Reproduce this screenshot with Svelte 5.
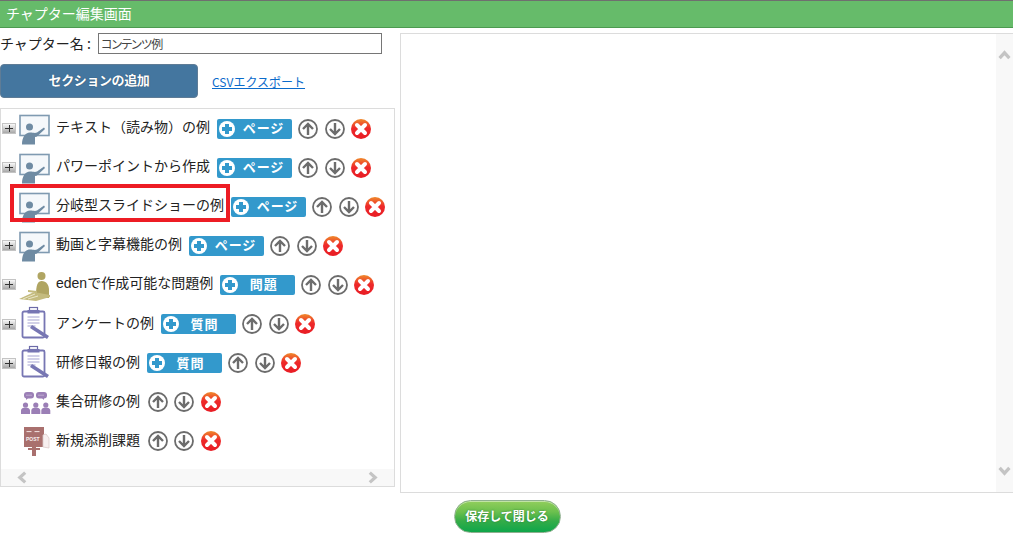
<script>
  const rows = [
    { name: 'テキスト（読み物）の例', kind: 'teacher', tree: true, add: 'ページ' },
    { name: 'パワーポイントから作成', kind: 'teacher', tree: true, add: 'ページ' },
    { name: '分岐型スライドショーの例', kind: 'teacher', tree: false, add: 'ページ', marked: true },
    { name: '動画と字幕機能の例', kind: 'teacher', tree: true, add: 'ページ' },
    { name: 'edenで作成可能な問題例', kind: 'eden', tree: true, add: '問題' },
    { name: 'アンケートの例', kind: 'clip', tree: true, add: '質問' },
    { name: '研修日報の例', kind: 'clip', tree: true, add: '質問' },
    { name: '集合研修の例', kind: 'group', tree: false },
    { name: '新規添削課題', kind: 'post', tree: false }
  ];
</script>

{#snippet icon(kind)}
  <svg class="kind" viewBox="0 0 34 34" aria-hidden="true">
    {#if kind === 'teacher'}
      <rect x="2" y="3.500" width="29" height="20" fill="#f5f8fb" stroke="#7f9ab1" stroke-width="1.600" />
      <circle cx="11.500" cy="15" r="3.500" fill="#6f8ba3" />
      <path d="M4 32.500c0-7 3-12 8-12 3 0 5 1 7 0l7-5 1 1.500-7 6.500c-1 1-2 1.500-3 1.500v7.500z" fill="#6f8ba3" />
    {:else if kind === 'eden'}
      <circle cx="23.500" cy="8" r="4" fill="#b0a562" />
      <path d="M18 30c0-8 0-17 5.500-17 5 0 7.500 4 7.500 9v8z" fill="#b0a562" />
      <path d="M10 22l9 1v2l-9-1zM1 31l15-7 16 3v2l-14 4z" fill="#c4bb7e" />
      <path d="M5 31l12-5M10 31l10-3" stroke="#f3f0dc" stroke-width="0.800" />
    {:else if kind === 'clip'}
      <rect x="4.500" y="4.500" width="22" height="26" rx="1.500" fill="#fff" stroke="#7776b3" stroke-width="1.800" />
      <rect x="11.500" y="0.500" width="8" height="3" fill="#fff" stroke="#6c6aa8" stroke-width="1.200" />
      <rect x="9.500" y="3" width="12" height="3.500" fill="#7776b3" />
      <path d="M9.500 10h12M9.500 13h12M9.500 16h12M9.500 19h8" stroke="#a5a4d2" stroke-width="1.200" />
      <path d="M14 18l17 11-2 3-17-11z" fill="#7776b3" />
    {:else if kind === 'group'}
      <rect x="6" y="7" width="10" height="6.500" rx="3" fill="#9b7fb6" />
      <rect x="18" y="7" width="11" height="6.500" rx="3" fill="#9b7fb6" />
      <path d="M8 12v3l3-3zM26 12v3l-3-3z" fill="#9b7fb6" />
      <path d="M8.500 10.200h5M20.500 10.200h6" stroke="#e9e1f0" stroke-width="0.900" stroke-dasharray="1 1" />
      <circle cx="7.500" cy="20" r="2.600" fill="#9b7fb6" />
      <circle cx="17.800" cy="20" r="2.600" fill="#9b7fb6" />
      <circle cx="27.800" cy="20" r="2.600" fill="#9b7fb6" />
      <path d="M3 29v-3.500c0-2 2-3 4.500-3s4.500 1 4.500 3V29zM13.300 29v-3.500c0-2 2-3 4.500-3s4.500 1 4.500 3V29zM23.300 29v-3.500c0-2 2-3 4.500-3s4.500 1 4.500 3V29z" fill="#9b7fb6" />
    {:else}
      <rect x="6" y="3" width="20" height="20" fill="#a9706e" />
      <path d="M8.500 7.600h5M16.500 7.600h5" stroke="#f2e4e3" stroke-width="1" />
      <rect x="14" y="23" width="4" height="9" fill="#a9706e" />
      <rect x="10" y="24" width="12" height="2" fill="#a9706e" />
      <path d="M25 11l3-1 3 4v10l-6-1z" fill="#f7efef" stroke="#dccbca" stroke-width="0.800" />
      <text x="8" y="17" class="post">POST</text>
    {/if}
  </svg>
{/snippet}

{#snippet controls()}
  <span class="controls">
    <svg class="ctl" viewBox="0 0 20 20" aria-hidden="true">
      <circle cx="10" cy="10" r="9" fill="#fff" stroke="#6c6c6c" stroke-width="1.800" />
      <path d="M10 16V5M5 10l5-5 5 5" fill="none" stroke="#6c6c6c" stroke-width="2.400" />
    </svg>
    <svg class="ctl" viewBox="0 0 20 20" aria-hidden="true">
      <circle cx="10" cy="10" r="9" fill="#fff" stroke="#6c6c6c" stroke-width="1.800" />
      <path d="M10 4v11M5 10l5 5 5-5" fill="none" stroke="#6c6c6c" stroke-width="2.400" />
    </svg>
    <svg class="ctl" viewBox="0 0 20 20" aria-hidden="true">
      <defs>
        <linearGradient id="redball" x1="0" y1="0" x2="0" y2="1">
          <stop offset="0" stop-color="#ef8a2c" />
          <stop offset="0.450" stop-color="#ee2a2a" />
          <stop offset="1" stop-color="#e81c24" />
        </linearGradient>
      </defs>
      <circle cx="10" cy="10" r="10" fill="url(#redball)" />
      <path d="M6 6l8 8M14 6l-8 8" stroke="#fff" stroke-width="4" stroke-linecap="round" />
    </svg>
  </span>
{/snippet}

<div class="page">
  <header class="title">チャプター編集画面</header>

  <div class="main">
    <section class="left">
      <div class="name-row">
        <label for="chapter">チャプター名 :</label>
        <input id="chapter" value="コンテンツ例" />
      </div>

      <div class="action-row">
        <button class="section-btn">セクションの追加</button>
        <a href="#csv" class="csv">CSVエクスポート</a>
      </div>

      <div class="tree">
        <div class="rows">
          {#each rows as row}
            <div class="row">
              <span class="toggle">
                {#if row.tree}
                  <span class="plus"></span>
                {/if}
              </span>
              <span class="slot">{@render icon(row.kind)}</span>
              <span class="label">{row.name}</span>
              {#if row.add}
                <button class="add">
                  <span class="add-ico"></span>
                  <span class="add-text" class:short={row.add.length === 2}>{row.add}</span>
                </button>
              {/if}
              {@render controls()}
              {#if row.marked}
                <span class="mark"></span>
              {/if}
            </div>
          {/each}
        </div>
        <div class="hbar">
          <svg class="chev" viewBox="0 0 12 12" aria-hidden="true"><path d="M8.500 1.500L3.500 6l5 4.500" /></svg>
          <svg class="chev" viewBox="0 0 12 12" aria-hidden="true"><path d="M3.500 1.500L8.500 6l-5 4.500" /></svg>
        </div>
      </div>
    </section>

    <section class="right">
      <div class="vbar">
        <svg class="chev" viewBox="0 0 12 12" aria-hidden="true"><path d="M1.500 8.500L6 3.500l4.500 5" /></svg>
        <svg class="chev" viewBox="0 0 12 12" aria-hidden="true"><path d="M1.500 3.500L6 8.500l4.500-5" /></svg>
      </div>
    </section>
  </div>

  <div class="footer">
    <button class="save">保存して閉じる</button>
  </div>
</div>

<style>
  :global(body) {
    margin: 0;
    background: #fff;
  }
  .page {
    width: 1013px;
    height: 554px;
    overflow: hidden;
    font-family: "Noto Sans CJK JP", "Liberation Sans", sans-serif;
    font-size: 14px;
    color: #222;
  }
  .title {
    box-sizing: border-box;
    height: 28px;
    padding-left: 6px;
    line-height: 25px;
    color: #fff;
    background: #66bb6a;
    border-top: 1px solid #6f6f6f;
    border-bottom: 1px solid #4c9a50;
  }
  .main {
    display: flex;
    gap: 5px;
    margin-top: 5px;
  }
  .left {
    width: 395px;
    flex: none;
  }
  .name-row {
    display: flex;
    align-items: center;
    height: 21px;
  }
  .name-row label {
    width: 98px;
    flex: none;
    margin-top: -2px;
    white-space: pre;
  }
  .name-row input {
    box-sizing: border-box;
    width: 284px;
    height: 21px;
    margin: 0;
    padding: 0 2px;
    border: 1px solid #767676;
    border-radius: 0;
    font: 12px "Noto Sans CJK JP", sans-serif;
    font-feature-settings: "palt";
    letter-spacing: -0.9px;
    color: #444;
    outline: none;
  }
  .action-row {
    display: flex;
    align-items: center;
    gap: 14px;
    margin-top: 10px;
  }
  .section-btn {
    box-sizing: border-box;
    width: 198px;
    height: 34px;
    padding: 0 0 4px;
    border: 1px solid #5f7c96;
    border-radius: 4px;
    background: #44769f;
    color: #fff;
    font: bold 13px "Noto Sans CJK JP", sans-serif;
    letter-spacing: -0.4px;
    text-shadow: 0 0 1px #1e3c58;
  }
  .csv {
    color: #0b6bcb;
    font-size: 12px;
    text-decoration: underline;
  }
  .tree {
    box-sizing: border-box;
    height: 379px;
    margin-top: 10px;
    border: 1px solid #dcdcdc;
    position: relative;
  }
  .rows {
    height: 360px;
  }
  .row {
    position: relative;
    display: flex;
    align-items: center;
    height: 39.1px;
    padding-left: 1px;
    white-space: nowrap;
  }
  .toggle {
    width: 16px;
    flex: none;
  }
  .plus {
    display: block;
    position: relative;
    width: 14px;
    height: 11px;
    box-sizing: border-box;
    border: 1px solid #c4c4c4;
    background: linear-gradient(#f8f8f8, #a8a8a8);
  }
  .plus::before,
  .plus::after {
    content: "";
    position: absolute;
    background: #333;
  }
  .plus::before {
    left: 2px;
    top: 4px;
    width: 8px;
    height: 1px;
  }
  .plus::after {
    left: 5.500px;
    top: 1px;
    width: 1px;
    height: 7px;
  }
  .slot {
    width: 38px;
    flex: none;
    height: 34px;
  }
  .kind {
    display: block;
    width: 34px;
    height: 34px;
    overflow: visible;
  }
  .post {
    font: bold 5px "Liberation Sans", sans-serif;
    fill: #f7efef;
  }
  .label {
    flex: none;
    margin-top: -5px;
    font-family: "Liberation Sans", "Noto Sans CJK JP", sans-serif;
    font-kerning: none;
  }
  .add {
    display: flex;
    align-items: center;
    box-sizing: border-box;
    width: 75px;
    height: 20px;
    margin: 0 0 0 7px;
    padding: 0 0 0 2px;
    border: none;
    border-radius: 2px;
    background: #3399cc;
    color: #fff;
    font: bold 13px "Noto Sans CJK JP", sans-serif;
  }
  .add-ico {
    position: relative;
    width: 16px;
    height: 16px;
    flex: none;
    border-radius: 50%;
    background: #fff;
  }
  .add-ico::before,
  .add-ico::after {
    content: "";
    position: absolute;
    background: #3399cc;
  }
  .add-ico::before {
    left: 3px;
    top: 6px;
    width: 10px;
    height: 4px;
  }
  .add-ico::after {
    left: 6px;
    top: 3px;
    width: 4px;
    height: 10px;
  }
  .add-text {
    flex: 1;
    text-align: center;
    letter-spacing: 1px;
    margin-top: -2px;
  }
  .add-text.short {
    padding-right: 6px;
  }
  .controls {
    display: flex;
    gap: 6.500px;
    margin-left: 6px;
  }
  .label + .controls {
    margin-left: 7.500px;
  }
  .ctl {
    display: block;
    width: 20px;
    height: 20px;
  }
  .mark {
    position: absolute;
    left: 9px;
    top: -3px;
    width: 220px;
    height: 38px;
    box-sizing: border-box;
    border: 4px solid #ed1c24;
    pointer-events: none;
  }
  .hbar {
    display: flex;
    justify-content: space-between;
    align-items: center;
    box-sizing: border-box;
    height: 17px;
    padding: 0 15px 0 15px;
    background: #f8f8f8;
  }
  .chev {
    display: block;
    width: 13px;
    height: 13px;
    fill: none;
    stroke: #c4c4c4;
    stroke-width: 3;
  }
  .right {
    flex: 1;
    box-sizing: border-box;
    height: 460px;
    border: 1px solid #dcdcdc;
    border-right: none;
    display: flex;
    justify-content: flex-end;
  }
  .vbar {
    width: 17px;
    background: #f8f8f8;
    display: flex;
    flex-direction: column;
    justify-content: space-between;
    align-items: center;
    padding: 15px 0 15px;
    box-sizing: border-box;
  }
  .footer {
    display: flex;
    justify-content: center;
    margin-top: 7px;
    padding-left: 1px;
  }
  .save {
    box-sizing: border-box;
    width: 107px;
    height: 33px;
    padding: 0 0 2px;
    border: 1px solid #8fb08f;
    border-radius: 17px;
    background: linear-gradient(#92ce5c 0%, #6cc04e 35%, #34ac48 65%, #0fa64a 100%);
    box-shadow: inset 0 1px 0 rgba(255, 255, 255, 0.45);
    color: #fff;
    font: bold 12px "Noto Sans CJK JP", sans-serif;
    text-shadow: 0 0 2px #2a7a32;
  }
</style>
